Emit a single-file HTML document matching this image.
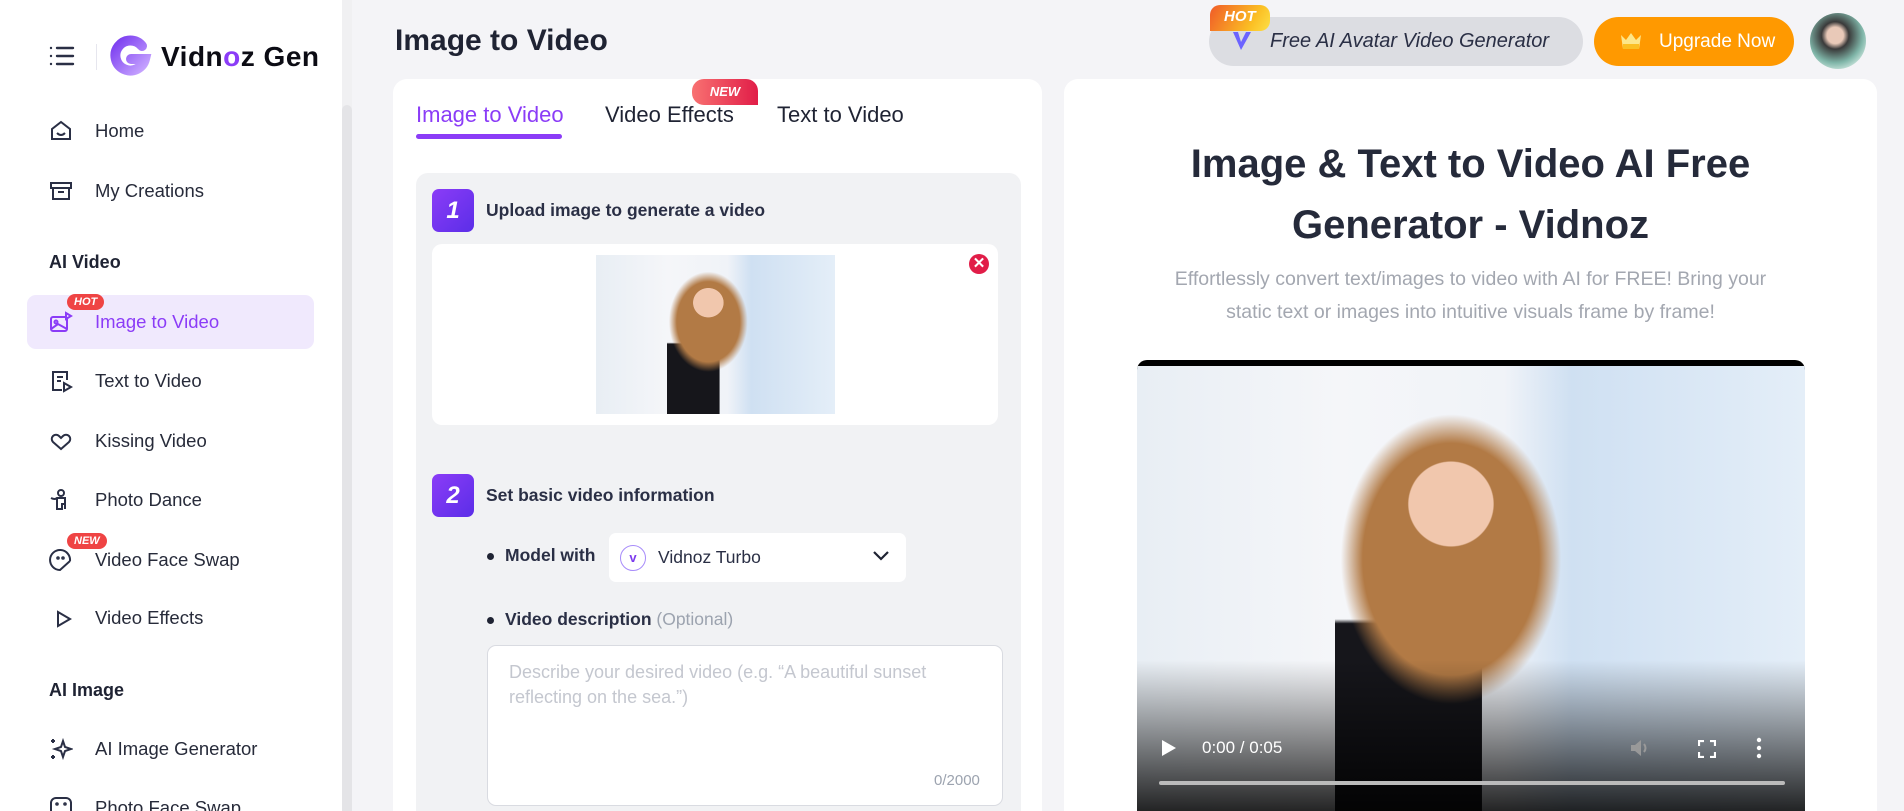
<!DOCTYPE html>
<html><head><meta charset="utf-8">
<style>
*{box-sizing:border-box;margin:0;padding:0}
html,body{width:1904px;height:811px;overflow:hidden}
body{background:#f4f4f7;font-family:"Liberation Sans",sans-serif;color:#1f2333;position:relative}
.abs{position:absolute}
.side{left:0;top:0;width:342px;height:811px;background:#fff}
.sb{left:342px;top:0;width:10px;height:811px;background:#f0f0f2}
.sbt{left:342px;top:105px;width:10px;height:706px;background:#e4e4e7;border-radius:5px 5px 0 0}
.item{position:absolute;left:95px;font-size:18.5px;color:#272b3a}
.sec{position:absolute;left:49px;font-size:18px;font-weight:bold;color:#1f2333}
.ic{position:absolute;left:49px;width:24px;height:24px}
.badge{position:absolute;background:#ef4444;color:#fff;font-size:11px;font-weight:bold;border-radius:9px;padding:2px 7px;font-style:italic}
.card{background:#fff;border-radius:14px}
.step{width:42px;height:43px;border-radius:7px;background:linear-gradient(135deg,#8b3cf7,#5b2ee8);color:#fff;font-weight:bold;font-style:italic;font-size:24px;text-align:center;line-height:43px}
.photo{background:
radial-gradient(ellipse 9% 13% at 47% 30%,#f1c7ad 70%,transparent 72%),
radial-gradient(ellipse 22% 42% at 47% 42%,#b27a45 60%,transparent 75%),
linear-gradient(180deg,transparent 55%,#16161b 56%) 38% 0/22% 100% no-repeat,
linear-gradient(90deg,#e8eef4 0%,#f5f6f9 30%,#f0f3f8 55%,#cfe0f2 65%,#e4eef8 100%);}
</style></head><body>
<div class="abs side"></div>
<div class="abs sb"></div><div class="abs sbt"></div>
<svg class="abs" style="left:49px;top:45px" width="26" height="22" viewBox="0 0 26 22"><g stroke="#2a2f45" stroke-width="2.4" stroke-linecap="round"><path d="M2 3h0M8 3h16M2 11h0M8 11h16M2 19h0M8 19h16"/></g></svg>
<div class="abs" style="left:96px;top:44px;width:1px;height:26px;background:#e6e6ee"></div>
<svg class="abs" style="left:108px;top:35px" width="44" height="44" viewBox="0 0 44 44"><defs><linearGradient id="g" x1="0" y1="0" x2="1" y2="1"><stop offset="0" stop-color="#7a3cf0"/><stop offset="1" stop-color="#c8a6ff"/></linearGradient></defs><path d="M34 11A15 15 0 1 0 37 24H23" fill="none" stroke="url(#g)" stroke-width="10" stroke-linecap="round"/></svg>
<div class="abs" style="left:161px;top:41px;font-size:28px;font-weight:bold;color:#0c0c14;letter-spacing:0.5px">Vidn<span style="color:#8b3cf7">o</span>z Gen</div>

<svg class="ic" style="top:119px" viewBox="0 0 24 24" fill="none" stroke="#2a2f45" stroke-width="2"><path d="M3 10l9-7 9 7v10H3z"/><path d="M8 14q4 4 8 0"/></svg>
<div class="item" style="top:120px">Home</div>
<svg class="ic" style="top:179px" viewBox="0 0 24 24" fill="none" stroke="#2a2f45" stroke-width="2"><rect x="2" y="4" width="20" height="5"/><path d="M4 9v11h16V9M9 13h6"/></svg>
<div class="item" style="top:180px">My Creations</div>
<div class="sec" style="top:252px">AI Video</div>
<div class="abs" style="left:27px;top:295px;width:287px;height:54px;background:#f0e9fd;border-radius:9px"></div>
<svg class="ic" style="top:310px" viewBox="0 0 24 24" fill="none" stroke="#8b3cf7" stroke-width="2"><rect x="2" y="7" width="16" height="14" rx="2"/><circle cx="7" cy="12" r="1.5"/><path d="M2 19l7-5 9 5M17 3l5 3-5 3z"/></svg>
<div class="badge" style="left:67px;top:294px">HOT</div>
<div class="item" style="top:311px;color:#8b3cf7">Image to Video</div>
<svg class="ic" style="top:369px" viewBox="0 0 24 24" fill="none" stroke="#2a2f45" stroke-width="2"><path d="M13 21H4V3h14v8M8 8h6M8 12h4"/><path d="M15 14l7 4-7 4z"/></svg>
<div class="item" style="top:370px">Text to Video</div>
<svg class="ic" style="top:429px" viewBox="0 0 24 24" fill="none" stroke="#2a2f45" stroke-width="2"><path d="M12 20L4 13a4 4 0 016-6l2 2 2-2a4 4 0 016 6z"/></svg>
<div class="item" style="top:430px">Kissing Video</div>
<svg class="ic" style="top:488px" viewBox="0 0 24 24" fill="none" stroke="#2a2f45" stroke-width="2"><circle cx="12" cy="5" r="3"/><path d="M2 10q4 2 6 0h8v11M8 10v11h5v-5h3"/></svg>
<div class="item" style="top:489px">Photo Dance</div>
<svg class="ic" style="top:548px" viewBox="0 0 24 24" fill="none" stroke="#2a2f45" stroke-width="2"><path d="M21 13A10 10 0 1 0 11 22l10-9"/><circle cx="9" cy="10" r="0.8"/><circle cx="14" cy="10" r="0.8"/></svg>
<div class="badge" style="left:67px;top:533px">NEW</div>
<div class="item" style="top:549px">Video Face Swap</div>
<svg class="ic" style="top:606px" viewBox="0 0 24 24" fill="none" stroke="#2a2f45" stroke-width="2"><path d="M9 6l12 7-12 7z"/><path d="M3 9h0M3 15h0M6 3h0"/></svg>
<div class="item" style="top:607px">Video Effects</div>
<div class="sec" style="top:680px">AI Image</div>
<svg class="ic" style="top:737px" viewBox="0 0 24 24" fill="none" stroke="#2a2f45" stroke-width="2"><path d="M14 4l2 6 6 2-6 2-2 6-2-6-6-2 6-2z"/><path d="M4 2v4M2 4h4M4 18v4M2 20h4"/></svg>
<div class="item" style="top:738px">AI Image Generator</div>
<svg class="ic" style="top:796px" viewBox="0 0 24 24" fill="none" stroke="#2a2f45" stroke-width="2"><rect x="2" y="2" width="20" height="20" rx="5"/><circle cx="8" cy="8" r="0.8"/><circle cx="16" cy="8" r="0.8"/></svg>
<div class="item" style="top:797px">Photo Face Swap</div>

<div class="abs" style="left:395px;top:24px;font-size:30px;font-weight:bold;color:#1f2333">Image to Video</div>
<div class="abs" style="left:1209px;top:17px;width:374px;height:49px;background:#dcdde2;border-radius:25px"></div>
<div class="abs" style="left:1210px;top:5px;width:60px;height:26px;background:linear-gradient(120deg,#f05a28,#fbbf24 70%,#fde047);border-radius:10px 10px 10px 0;color:#fff;font-weight:bold;font-style:italic;font-size:15px;padding:3px 0 0 14px">HOT</div>
<svg class="abs" style="left:1231px;top:29px" width="22" height="24" viewBox="0 0 22 24"><path d="M2 3l8 18 10-18-5 0-5 10-3-10z" fill="#6c63ff"/></svg>
<div class="abs" style="left:1270px;top:30px;font-size:20px;font-style:italic;color:#2a2f45">Free AI Avatar Video Generator</div>
<div class="abs" style="left:1594px;top:17px;width:200px;height:49px;background:#ff9900;border-radius:25px;color:#fff;font-size:19px;line-height:49px;padding-left:65px">Upgrade Now</div>
<svg class="abs" style="left:1620px;top:32px" width="22" height="18" viewBox="0 0 22 18"><path d="M1 3l5 5 5-7 5 7 5-5-2 14H3z" fill="#fde68a"/><rect x="3" y="12" width="16" height="5" fill="#fbbf24"/></svg>
<div class="abs" style="left:1810px;top:13px;width:56px;height:56px;border-radius:50%;background:radial-gradient(circle at 45% 40%,#e9c9b8 18%,#3a3a3a 30%,#7fb5a8 60%,#cfe8e0 80%)"></div>

<div class="abs card" style="left:393px;top:79px;width:649px;height:732px;border-radius:14px 14px 0 0"></div>
<div class="abs" style="left:416px;top:102px;font-size:22px;color:#8b3cf7">Image to Video</div>
<div class="abs" style="left:416px;top:134px;width:146px;height:5px;border-radius:3px;background:#8b3cf7"></div>
<div class="abs" style="left:605px;top:102px;font-size:22px;color:#1f2333">Video Effects</div>
<div class="abs" style="left:692px;top:79px;width:66px;height:26px;background:linear-gradient(90deg,#f87171,#e11d48);border-radius:12px 12px 0 12px;color:#fff;font-weight:bold;font-style:italic;font-size:13px;text-align:center;line-height:26px">NEW</div>
<div class="abs" style="left:777px;top:102px;font-size:22px;color:#1f2333">Text to Video</div>
<div class="abs" style="left:416px;top:173px;width:605px;height:638px;background:#f1f2f4;border-radius:12px 12px 0 0"></div>
<div class="abs step" style="left:432px;top:189px">1</div>
<div class="abs" style="left:486px;top:200px;font-size:17.5px;font-weight:bold;color:#2a2f45">Upload image to generate a video</div>
<div class="abs" style="left:432px;top:244px;width:566px;height:181px;background:#fff;border-radius:10px"></div>
<div class="abs photo" style="left:596px;top:255px;width:239px;height:159px"></div>
<div class="abs" style="left:969px;top:254px;width:20px;height:20px;border-radius:50%;background:#e11d48;color:#fff;font-size:15px;font-weight:bold;text-align:center;line-height:20px">✕</div>
<div class="abs step" style="left:432px;top:474px">2</div>
<div class="abs" style="left:486px;top:485px;font-size:17.5px;font-weight:bold;color:#2a2f45">Set basic video information</div>
<div class="abs" style="left:487px;top:553px;width:7px;height:7px;border-radius:50%;background:#1f2333"></div>
<div class="abs" style="left:505px;top:545px;font-size:17.5px;font-weight:bold;color:#2a2f45">Model with</div>
<div class="abs" style="left:609px;top:533px;width:297px;height:49px;background:#fff;border-radius:7px"></div>
<div class="abs" style="left:620px;top:545px;width:26px;height:26px;border-radius:50%;border:1.5px solid #a78bfa;color:#7c3aed;font-size:13px;text-align:center;line-height:23px;font-weight:bold">v</div>
<div class="abs" style="left:658px;top:547px;font-size:17.5px;color:#2a2f45">Vidnoz Turbo</div>
<svg class="abs" style="left:872px;top:550px" width="18" height="12" viewBox="0 0 18 12"><path d="M2 2l7 7 7-7" fill="none" stroke="#1f2333" stroke-width="2.2"/></svg>
<div class="abs" style="left:487px;top:617px;width:7px;height:7px;border-radius:50%;background:#1f2333"></div>
<div class="abs" style="left:505px;top:609px;font-size:17.5px;font-weight:bold;color:#2a2f45">Video description <span style="font-weight:normal;color:#9ca3af">(Optional)</span></div>
<div class="abs" style="left:487px;top:645px;width:516px;height:161px;background:#fff;border:1px solid #d9dbe1;border-radius:9px"></div>
<div class="abs" style="left:509px;top:660px;font-size:18px;color:#c4c7cf;line-height:25px;width:460px">Describe your desired video (e.g. “A beautiful sunset reflecting on the sea.”)</div>
<div class="abs" style="left:934px;top:772px;font-size:15px;color:#9ca3af">0/2000</div>

<div class="abs card" style="left:1064px;top:79px;width:813px;height:732px;border-radius:14px 14px 0 0"></div>
<div class="abs" style="left:1064px;top:134px;width:813px;text-align:center;font-size:40px;font-weight:bold;color:#252a3a;line-height:61px">Image &amp; Text to Video AI Free<br>Generator - Vidnoz</div>
<div class="abs" style="left:1064px;top:263px;width:813px;text-align:center;font-size:19.5px;color:#a3a7b0;line-height:33px">Effortlessly convert text/images to video with AI for FREE! Bring your<br>static text or images into intuitive visuals frame by frame!</div>
<div class="abs" style="left:1137px;top:360px;width:668px;height:451px;background:#000;border-radius:10px 10px 0 0;overflow:hidden">
 <div class="abs photo" style="left:0;top:6px;width:668px;height:460px"></div>
 <div class="abs" style="left:0;top:300px;width:668px;height:151px;background:linear-gradient(180deg,transparent,rgba(0,0,0,.85))"></div>
 <svg class="abs" style="left:24px;top:379px" width="16" height="18" viewBox="0 0 16 18"><path d="M1 1l14 8-14 8z" fill="#fff"/></svg>
 <div class="abs" style="left:65px;top:378px;color:#fff;font-size:17px">0:00 / 0:05</div>
 <svg class="abs" style="left:493px;top:378px" width="22" height="20" viewBox="0 0 22 20"><path d="M1 7h4l6-5v16l-6-5H1z" fill="#999"/><path d="M14 6q3 4 0 8" stroke="#999" stroke-width="2" fill="none"/></svg>
 <svg class="abs" style="left:561px;top:380px" width="18" height="18" viewBox="0 0 18 18"><path d="M1 6V1h5M12 1h5v5M17 12v5h-5M6 17H1v-5" stroke="#fff" stroke-width="2.2" fill="none"/></svg>
 <svg class="abs" style="left:618px;top:377px" width="8" height="22" viewBox="0 0 8 22"><circle cx="4" cy="3" r="2.2" fill="#fff"/><circle cx="4" cy="11" r="2.2" fill="#fff"/><circle cx="4" cy="19" r="2.2" fill="#fff"/></svg>
 <div class="abs" style="left:22px;top:421px;width:626px;height:4px;border-radius:2px;background:#bbb"></div>
</div>
</body></html>
